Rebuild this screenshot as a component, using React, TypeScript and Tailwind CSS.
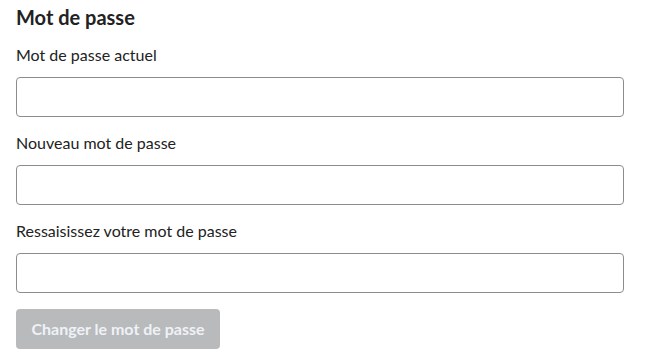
export default function App() {
  const fields = [
    { id: "current", label: "Mot de passe actuel" },
    { id: "new", label: "Nouveau mot de passe" },
    { id: "confirm", label: "Ressaisissez votre mot de passe" },
  ]

  return (
    <div className="min-h-screen bg-white font-['Lato','Noto_Sans',sans-serif] text-[#222222]">
      <form className="px-4 pt-[5px]" onSubmit={(e) => e.preventDefault()}>
        <h2 className="mb-[14px] text-[20px] font-bold leading-6">Mot de passe</h2>
        {fields.map((f) => (
          <div key={f.id} className="mb-[14px]">
            <label htmlFor={f.id} className="mb-[10px] block text-base leading-6">
              {f.label}
            </label>
            <input
              id={f.id}
              type="password"
              className="block h-10 w-[608px] rounded border border-[#8c8c8c] bg-white px-3 text-base outline-none"
            />
          </div>
        ))}
        <button
          type="submit"
          disabled
          className="mt-[2px] h-10 w-[204px] rounded bg-[#b9babc] text-base font-bold text-[#eef2f7]"
        >
          Changer le mot de passe
        </button>
      </form>
    </div>
  )
}
